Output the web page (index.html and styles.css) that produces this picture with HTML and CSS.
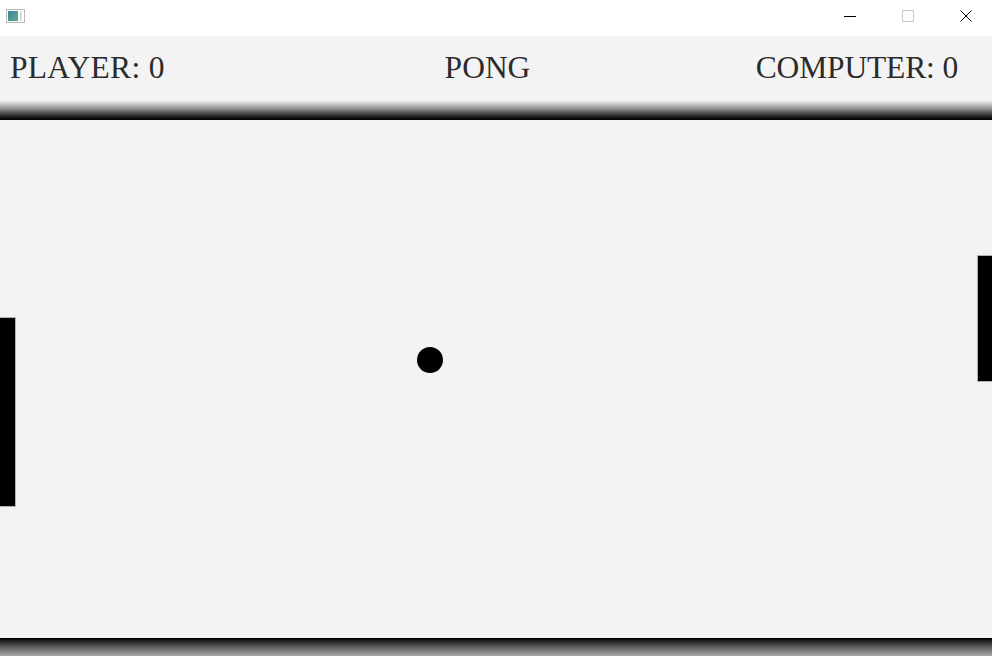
FILE: index.html
```html
<!DOCTYPE html>
<html>
<head>
<meta charset="utf-8">
<link rel="stylesheet" href="styles.css">
</head>
<body>
<div class="window">
  <div class="titlebar">
    <svg class="app-icon" width="19" height="14" viewBox="0 0 19 14">
      <defs>
        <linearGradient id="g" x1="0" y1="0" x2="1" y2="1">
          <stop offset="0" stop-color="#3b7fa8"/>
          <stop offset="1" stop-color="#5fae7a"/>
        </linearGradient>
      </defs>
      <rect x="0.5" y="0.5" width="18" height="13" fill="#fff" stroke="#b8b8b8"/>
      <rect x="2" y="2" width="10" height="10" fill="url(#g)"/>
      <rect x="14" y="2" width="2" height="10" fill="#cfe3d8"/>
    </svg>
    <div class="controls">
      <span class="ctl"><svg width="12" height="12" viewBox="0 0 12 12"><path d="M0 6.5h12" stroke="#000" stroke-width="1"/></svg></span>
      <span class="ctl"><svg width="12" height="12" viewBox="0 0 12 12"><rect x="0.5" y="0.5" width="11" height="11" fill="none" stroke="#c4c4c4"/></svg></span>
      <span class="ctl"><svg width="12" height="12" viewBox="0 0 12 12"><path d="M0.5 0.5L11.5 11.5M11.5 0.5L0.5 11.5" stroke="#000" stroke-width="1"/></svg></span>
    </div>
  </div>
  <div class="scorebar">
    <div class="score player">PLAYER: 0</div>
    <div class="score title">PONG</div>
    <div class="score computer">COMPUTER: 0</div>
  </div>
  <div class="wall-top"></div>
  <div class="court">
    <div class="paddle left"></div>
    <div class="ball"></div>
    <div class="paddle right"></div>
  </div>
  <div class="wall-bottom"></div>
</div>
</body>
</html>
```

FILE: styles.css
```css
html, body {
  margin: 0;
  padding: 0;
  background: #f3f3f3;
}
.window {
  width: 992px;
  height: 656px;
  display: flex;
  flex-direction: column;
  overflow: hidden;
}
.titlebar {
  height: 36px;
  flex: none;
  background: #ffffff;
  display: flex;
  align-items: flex-start;
  justify-content: space-between;
}
.app-icon {
  margin-left: 6px;
  margin-top: 9px;
}
.controls {
  display: flex;
  padding-top: 10px;
  margin-right: -3px;
}
.ctl {
  width: 58px;
  display: flex;
  justify-content: center;
}
.ctl svg {
  display: block;
}
.scorebar {
  height: 64px;
  flex: none;
  background: #f3f3f3;
  display: grid;
  grid-template-columns: 1fr auto 1fr;
  align-items: center;
  padding: 0 27px 0 10px;
  font-family: "Liberation Serif", "Times New Roman", serif;
  font-size: 31.5px;
  color: #2b2b2b;
}
.score.player {
  justify-self: start;
  letter-spacing: 0.3px;
}
.score.computer {
  justify-self: end;
  margin-right: 7px;
  letter-spacing: -0.15px;
}
.wall-top {
  height: 20px;
  flex: none;
  background: linear-gradient(to bottom, #f6f6f6 0%, #9a9a9a 40%, #1a1a1a 85%, #000 100%);
}
.court {
  flex: 1;
  position: relative;
  background: #f3f3f3;
}
.wall-bottom {
  height: 18px;
  flex: none;
  background: linear-gradient(to bottom, #000 0%, #555 45%, #a8a8a8 100%);
}
.paddle {
  position: absolute;
  width: 15px;
  background: #000;
  box-shadow: 0 0 0 1px #b0b0b0;
}
.paddle.left {
  left: 0;
  top: 198px;
  height: 188px;
}
.paddle.right {
  left: 978px;
  top: 136px;
  height: 125px;
}
.ball {
  position: absolute;
  left: 417px;
  top: 227px;
  width: 26px;
  height: 26px;
  border-radius: 50%;
  background: #000;
}
```
